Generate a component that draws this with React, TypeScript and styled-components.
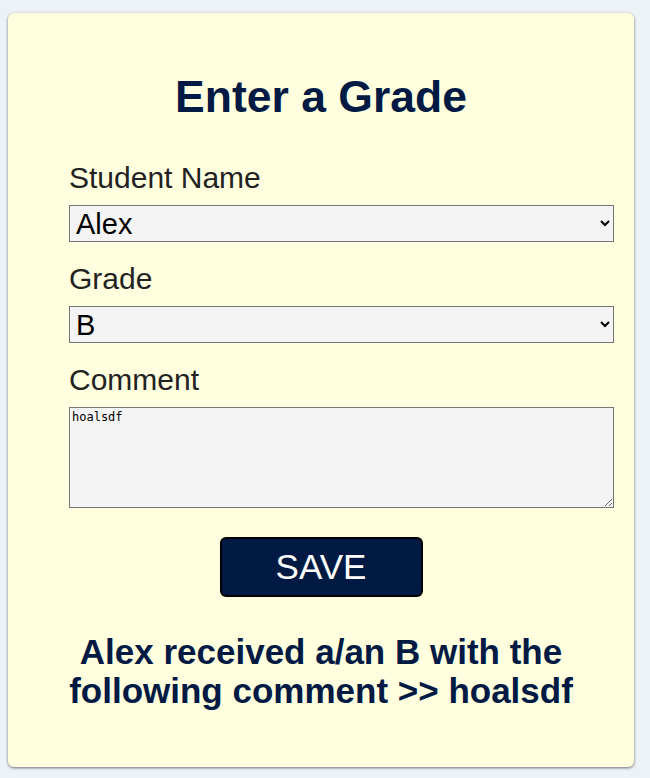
import React, { useState } from "react";
import styled, { createGlobalStyle } from "styled-components";

const GlobalStyle = createGlobalStyle`
  html, body {
    margin: 0;
    padding: 0;
    background: #edf2f7;
  }
  body {
    font-family: "Liberation Sans", Arial, sans-serif;
  }
`;

const Page = styled.div`
  padding: 13px 16px 11px 8px;
`;

const Card = styled.div`
  background: #ffffe0;
  border-radius: 6px;
  box-shadow: 0 1px 3px rgba(0, 0, 0, 0.55);
  height: 754px;
  box-sizing: border-box;
  padding-top: 59px;
  display: flex;
  flex-direction: column;
  align-items: center;
`;

const Title = styled.h1`
  margin: 0;
  font-size: 44.5px;
  line-height: normal;
  font-weight: bold;
  color: #001a43;
  text-align: center;
`;

const Form = styled.form`
  align-self: stretch;
  margin: 39px 0 0;
  padding: 0 20px 0 61px;
  display: flex;
  flex-direction: column;
`;

const Label = styled.label`
  display: block;
  font-size: 30px;
  line-height: normal;
  color: #222222;
  margin-bottom: 10px;
`;

const Field = styled.div`
  margin-bottom: 20px;
`;

const Select = styled.select`
  display: block;
  width: 100%;
  height: 37px;
  box-sizing: border-box;
  font-family: "Liberation Sans", Arial, sans-serif;
  font-size: 29px;
  color: #000;
  background-color: #f4f4f4;
  border: 1px solid #767676;
  border-radius: 0;
  padding: 0 2px;
`;

const TextArea = styled.textarea`
  display: block;
  width: 100%;
  height: 101px;
  box-sizing: border-box;
  font-family: "DejaVu Sans Mono", monospace;
  font-size: 12px;
  color: #000;
  background-color: #f4f4f4;
  border: 1px solid #767676;
  border-radius: 0;
  padding: 2px;
  resize: both;
`;

const SaveButton = styled.button`
  margin-top: 9px;
  width: 203px;
  height: 60px;
  box-sizing: border-box;
  background: #001a43;
  color: #ffffff;
  border: 2px solid #000000;
  border-radius: 6px;
  font-family: "Liberation Sans", Arial, sans-serif;
  font-size: 35px;
  cursor: pointer;
`;

const Result = styled.p`
  margin: 36px 0 0;
  max-width: 560px;
  font-size: 35px;
  line-height: 38.5px;
  font-weight: bold;
  color: #001a43;
  text-align: center;
`;

export default function App() {
  const [name, setName] = useState("Alex");
  const [grade, setGrade] = useState("B");
  const [comment, setComment] = useState("hoalsdf");

  return (
    <>
      <GlobalStyle />
      <Page>
        <Card>
          <Title>Enter a Grade</Title>
          <Form onSubmit={(e) => e.preventDefault()}>
            <Field>
              <Label htmlFor="student">Student Name</Label>
              <Select id="student" value={name} onChange={(e) => setName(e.target.value)}>
                <option>Alex</option>
                <option>Jordan</option>
                <option>Sam</option>
              </Select>
            </Field>
            <Field>
              <Label htmlFor="grade">Grade</Label>
              <Select id="grade" value={grade} onChange={(e) => setGrade(e.target.value)}>
                <option>A</option>
                <option>B</option>
                <option>C</option>
                <option>D</option>
                <option>F</option>
              </Select>
            </Field>
            <Field>
              <Label htmlFor="comment">Comment</Label>
              <TextArea id="comment" value={comment} onChange={(e) => setComment(e.target.value)} />
            </Field>
          </Form>
          <SaveButton type="button">SAVE</SaveButton>
          <Result>
            {name} received a/an {grade} with the following comment &gt;&gt; {comment}
          </Result>
        </Card>
      </Page>
    </>
  );
}
